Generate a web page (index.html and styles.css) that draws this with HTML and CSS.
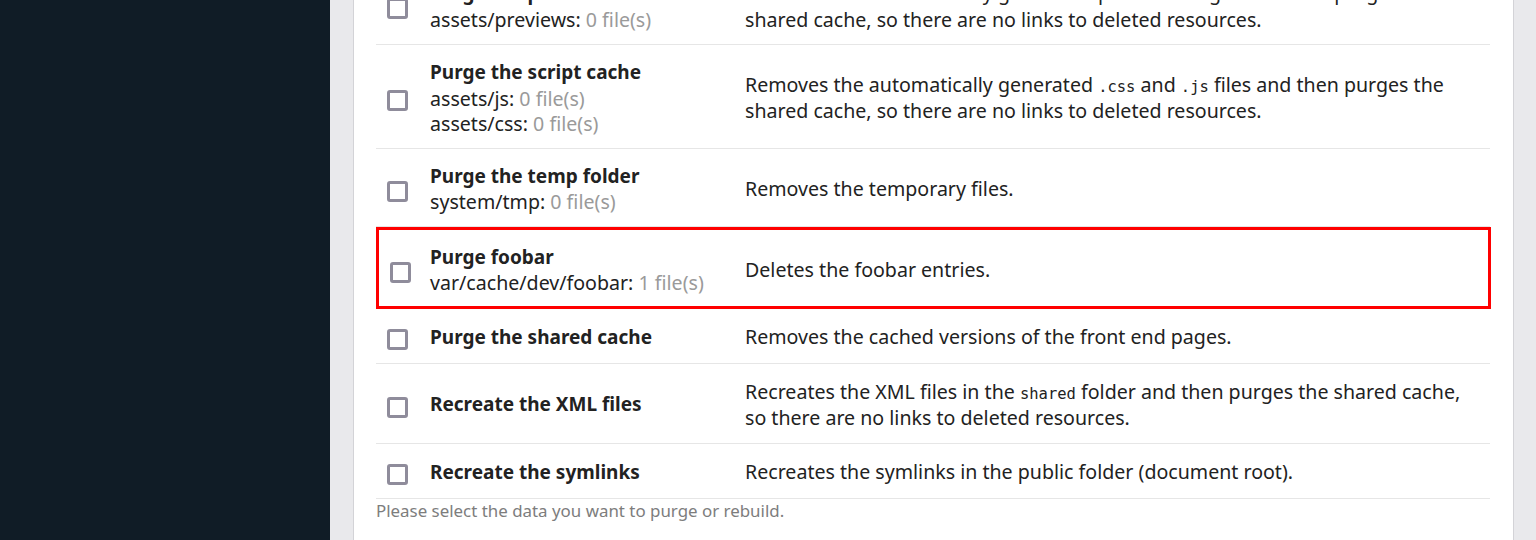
FILE: index.html
```html
<!DOCTYPE html>
<html lang="en">
<head>
<meta charset="utf-8">
<title>Purge data</title>
<link rel="stylesheet" href="styles.css">
</head>
<body>
<div class="app">
  <aside class="sidebar"></aside>
  <main class="main">
    <section class="panel">
      <div class="purge-table">
        <div class="row">
          <div class="cell-check"><input type="checkbox" class="cb"></div>
          <div class="cell-title">
            <div class="title">Purge the preview cache</div>
            <div class="path">assets/previews: <span class="count">0 file(s)</span></div>
          </div>
          <div class="cell-desc">Removes the automatically generated preview images and then purges the<br>shared cache, so there are no links to deleted resources.</div>
        </div>
        <div class="row">
          <div class="cell-check"><input type="checkbox" class="cb"></div>
          <div class="cell-title">
            <div class="title">Purge the script cache</div>
            <div class="path">assets/js: <span class="count">0 file(s)</span></div>
            <div class="path">assets/css: <span class="count">0 file(s)</span></div>
          </div>
          <div class="cell-desc">Removes the automatically generated <code>.css</code> and <code>.js</code> files and then purges the<br>shared cache, so there are no links to deleted resources.</div>
        </div>
        <div class="row">
          <div class="cell-check"><input type="checkbox" class="cb"></div>
          <div class="cell-title">
            <div class="title">Purge the temp folder</div>
            <div class="path">system/tmp: <span class="count">0 file(s)</span></div>
          </div>
          <div class="cell-desc">Removes the temporary files.</div>
        </div>
        <div class="row row--highlight">
          <div class="cell-check"><input type="checkbox" class="cb"></div>
          <div class="cell-title">
            <div class="title">Purge foobar</div>
            <div class="path">var/cache/dev/foobar: <span class="count">1 file(s)</span></div>
          </div>
          <div class="cell-desc">Deletes the foobar entries.</div>
        </div>
        <div class="row">
          <div class="cell-check"><input type="checkbox" class="cb"></div>
          <div class="cell-title">
            <div class="title">Purge the shared cache</div>
          </div>
          <div class="cell-desc">Removes the cached versions of the front end pages.</div>
        </div>
        <div class="row">
          <div class="cell-check"><input type="checkbox" class="cb"></div>
          <div class="cell-title">
            <div class="title">Recreate the XML files</div>
          </div>
          <div class="cell-desc">Recreates the XML files in the <code>shared</code> folder and then purges the shared cache,<br>so there are no links to deleted resources.</div>
        </div>
        <div class="row">
          <div class="cell-check"><input type="checkbox" class="cb"></div>
          <div class="cell-title">
            <div class="title">Recreate the symlinks</div>
          </div>
          <div class="cell-desc">Recreates the symlinks in the public folder (document root).</div>
        </div>
      </div>
      <p class="hint">Please select the data you want to purge or rebuild.</p>
    </section>
  </main>
</div>
</body>
</html>
```

FILE: styles.css
```css
* { box-sizing: border-box; }

html, body {
  margin: 0;
  height: 100%;
  overflow: hidden;
}

body {
  font-family: "Noto Sans", "Open Sans", sans-serif;
  font-size: 19.6px;
  color: #222;
  background: #e9e9ec;
}

.app {
  display: flex;
  height: 540px;
}

.sidebar {
  width: 330px;
  flex: 0 0 330px;
  background: #101c26;
}

.main {
  flex: 1;
  background: #e9e9ec;
  padding: 0 22px 0 23px;
}

.panel {
  display: flow-root;
  height: 100%;
  background: #fff;
  border-left: 1px solid #d3d3d7;
  border-right: 1px solid #d3d3d7;
  padding: 0 23px 0 22px;
}

.purge-table {
  margin-top: -35px;
}

.row {
  display: grid;
  grid-template-columns: 54px 315px 1fr;
  align-items: center;
  min-height: 55px;
  padding: 15px 0 11px;
  border-bottom: 1px solid #e6e6e6;
}

.row--highlight {
  border: 3px solid #ff0000;
  grid-template-columns: 51px 315px 1fr;
  padding: 15px 0 10px;
  margin-right: -1px;
}

.cell-check {
  display: flex;
  padding-left: 11px;
  padding-top: 4px;
}

.cb {
  appearance: none;
  -webkit-appearance: none;
  margin: 0;
  width: 21px;
  height: 21px;
  border: 3px solid #8f8c9b;
  border-radius: 3px;
  background: #fff;
}

.cell-title {
  line-height: 25.5px;
}

.title {
  font-weight: 700;
  font-size: 19px;
}

.count {
  color: #9a9a9a;
}

.cell-desc {
  line-height: 26.5px;
}

code {
  font-family: "DejaVu Sans Mono", "Liberation Mono", monospace;
  font-size: 15.5px;
  line-height: 1;
}

.hint {
  margin: 0;
  font-size: 16.9px;
  line-height: 24px;
  color: #7d7d7d;
}
```
